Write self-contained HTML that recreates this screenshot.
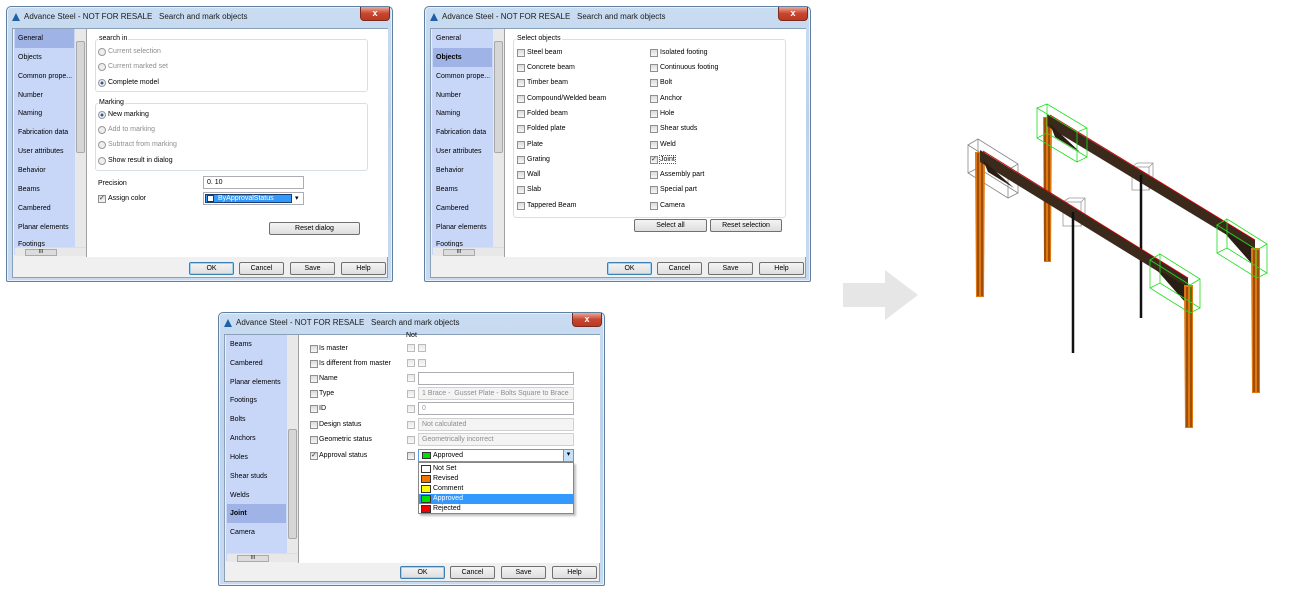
<!DOCTYPE html>
<html><head><meta charset="utf-8"><style>
*{margin:0;padding:0;box-sizing:border-box}
body{width:1308px;height:592px;background:#fff;position:relative;overflow:hidden;font-family:"Liberation Sans",sans-serif;font-size:7px;color:#000}
.a{position:absolute;white-space:nowrap}
.dlg{position:absolute;width:387px;height:276px;background:linear-gradient(#c9dcf1,#bcd2ec 40%,#c7daf0);border:1px solid #61809f;border-radius:5px 5px 2px 2px;box-shadow:0 0 0 1px #e8f0fa inset}
.ttl{position:absolute;left:17px;top:5px;font-size:8px;color:#1a1a1a}
.ico{position:absolute;left:5px;top:6px;width:0;height:0;border-left:4px solid transparent;border-right:4px solid transparent;border-bottom:8px solid #1f5fa8}
.cls{position:absolute;left:353px;top:0;width:30px;height:14px;background:linear-gradient(#e9a99a,#c9452f 50%,#b83a22);border:1px solid #7a2b1e;border-top:none;border-radius:0 0 4px 4px;color:#fff;font-size:9px;text-align:center;line-height:13px;font-weight:bold}
.cl{position:absolute;left:5px;top:21px;width:376px;height:250px;background:#f0f0f0;border:1px solid #8aa0b8}
.lst{position:absolute;left:1px;top:0;width:61px;height:226px;background:#c8d6f8;overflow:hidden}
.sb{position:absolute;left:62px;top:0;width:11px;height:226px;background:#e8e8e8}
.th{position:absolute;left:1px;width:9px;background:#d6d6d6;border:1px solid #a8a8a8;border-radius:2px}
.hs{position:absolute;left:2px;top:218px;width:71px;height:9px;background:#e8e8e8;border-top:1px solid #ddd}
.hth{position:absolute;left:10px;top:1px;width:32px;height:7px;background:#dcdcdc;border:1px solid #aaa;font-size:5px;text-align:center;line-height:5px}
.wh{position:absolute;left:73px;top:0;width:302px;height:228px;background:#fff;border-left:1px solid #a0a0a0}
.it{position:absolute;left:1px;width:59px;height:19px;line-height:19px;padding-left:3px;font-size:7px;white-space:nowrap;overflow:hidden}
.sel{background:#9fb3e6;}
.btn{position:absolute;height:13px;width:45px;background:linear-gradient(#f4f4f4,#dedede);border:1px solid #707070;border-radius:2px;text-align:center;line-height:11px;font-size:7px}
.ok{border-color:#3c7fb1;box-shadow:0 0 0 1px #9ed3f3 inset}
.cb{position:absolute;width:8px;height:8px;border:1px solid #8e8f8f;background:linear-gradient(#dcdcdc,#f6f6f6)}
.rd{position:absolute;width:8px;height:8px;border:1px solid #999;border-radius:50%;background:#eee}
.dis{color:#8d8d8d}
.grp{position:absolute;border:1px solid #d5dfe5;border-radius:3px}
.gl{position:absolute;background:#fff;padding:0 1px;font-size:7px}
.inp{position:absolute;height:13px;border:1px solid #abadb3;background:#fff;font-size:7px;line-height:11px;padding-left:3px}
.gi{background:#f4f4f4;border-color:#d0d0d0;color:#8d8d8d}
</style></head><body>

<!-- DIALOG 1 -->
<div class="dlg" style="left:6px;top:6px">
<div class="ico"></div><div class="ttl">Advance Steel - NOT FOR RESALE&nbsp;&nbsp; Search and mark objects</div>
<div class="cls">x</div>
<div class="cl">
 <div class="lst">
  <div class="it sel" style="top:0">General</div>
  <div class="it" style="top:19px">Objects</div>
  <div class="it" style="top:38px">Common prope...</div>
  <div class="it" style="top:57px">Number</div>
  <div class="it" style="top:75px">Naming</div>
  <div class="it" style="top:94px">Fabrication data</div>
  <div class="it" style="top:113px">User attributes</div>
  <div class="it" style="top:132px">Behavior</div>
  <div class="it" style="top:151px">Beams</div>
  <div class="it" style="top:170px">Cambered</div>
  <div class="it" style="top:189px">Planar elements</div>
  <div class="it" style="top:207px;height:11px;line-height:18px">Footings</div>
 </div>
 <div class="sb"><div class="th" style="top:12px;height:112px"></div></div>
 <div class="hs"><div class="hth">III</div></div>
 <div class="wh">
  <div class="grp" style="left:8px;top:10px;width:273px;height:53px"></div><div class="gl" style="left:11px;top:6px">search in</div>
  <div class="rd" style="left:11px;top:19px"></div><div class="a dis" style="left:21px;top:19px">Current selection</div>
  <div class="rd" style="left:11px;top:34px"></div><div class="a dis" style="left:21px;top:34px">Current marked set</div>
  <div class="rd" style="left:11px;top:50px;background:radial-gradient(#1f5fa8 30%,#eee 40%)"></div><div class="a" style="left:21px;top:50px">Complete model</div>
  <div class="grp" style="left:8px;top:74px;width:273px;height:68px"></div><div class="gl" style="left:11px;top:70px">Marking</div>
  <div class="rd" style="left:11px;top:82px;background:radial-gradient(#1f5fa8 30%,#eee 40%)"></div><div class="a" style="left:21px;top:82px">New marking</div>
  <div class="rd" style="left:11px;top:97px"></div><div class="a dis" style="left:21px;top:97px">Add to marking</div>
  <div class="rd" style="left:11px;top:112px"></div><div class="a dis" style="left:21px;top:112px">Subtract from marking</div>
  <div class="rd" style="left:11px;top:128px"></div><div class="a" style="left:21px;top:128px">Show result in dialog</div>
  <div class="a" style="left:11px;top:151px">Precision</div>
  <div class="inp" style="left:116px;top:147px;width:101px">0. 10</div>
  <div class="cb" style="left:11px;top:166px;font-size:7px;line-height:6px;color:#333">✓</div><div class="a" style="left:21px;top:166px">Assign color</div>
  <div class="inp" style="left:116px;top:163px;width:101px;padding:1px"><div style="position:absolute;left:1px;top:1px;width:87px;height:9px;background:#3399ff;border:1px solid #1a3e6e;color:#fff;padding-left:12px;line-height:7px">ByApprovalStatus</div><div style="position:absolute;left:3px;top:2px;width:7px;height:7px;background:#fff;border:1px solid #333"></div><div class="a" style="left:91px;top:0;font-size:7px">▾</div></div>
  <div class="btn" style="left:182px;top:193px;width:91px">Reset dialog</div>
 </div>
 <div class="btn ok" style="left:176px;top:233px">OK</div>
 <div class="btn" style="left:226px;top:233px">Cancel</div>
 <div class="btn" style="left:277px;top:233px">Save</div>
 <div class="btn" style="left:328px;top:233px">Help</div>
</div></div>

<!-- DIALOG 2 -->
<div class="dlg" style="left:424px;top:6px">
<div class="ico"></div><div class="ttl">Advance Steel - NOT FOR RESALE&nbsp;&nbsp; Search and mark objects</div>
<div class="cls">x</div>
<div class="cl">
 <div class="lst">
  <div class="it" style="top:0">General</div>
  <div class="it sel" style="top:19px;font-weight:bold">Objects</div>
  <div class="it" style="top:38px">Common prope...</div>
  <div class="it" style="top:57px">Number</div>
  <div class="it" style="top:75px">Naming</div>
  <div class="it" style="top:94px">Fabrication data</div>
  <div class="it" style="top:113px">User attributes</div>
  <div class="it" style="top:132px">Behavior</div>
  <div class="it" style="top:151px">Beams</div>
  <div class="it" style="top:170px">Cambered</div>
  <div class="it" style="top:189px">Planar elements</div>
  <div class="it" style="top:207px;height:11px;line-height:18px">Footings</div>
 </div>
 <div class="sb"><div class="th" style="top:12px;height:112px"></div></div>
 <div class="hs"><div class="hth">III</div></div>
 <div class="wh">
  <div class="grp" style="left:8px;top:10px;width:273px;height:179px"></div><div class="gl" style="left:11px;top:6px">Select objects</div>
  <div class="cb" style="left:12px;top:20px"></div><div class="a" style="left:22px;top:20px">Steel beam</div>
  <div class="cb" style="left:12px;top:35px"></div><div class="a" style="left:22px;top:35px">Concrete beam</div>
  <div class="cb" style="left:12px;top:50px"></div><div class="a" style="left:22px;top:50px">Timber beam</div>
  <div class="cb" style="left:12px;top:66px"></div><div class="a" style="left:22px;top:66px">Compound/Welded beam</div>
  <div class="cb" style="left:12px;top:81px"></div><div class="a" style="left:22px;top:81px">Folded beam</div>
  <div class="cb" style="left:12px;top:96px"></div><div class="a" style="left:22px;top:96px">Folded plate</div>
  <div class="cb" style="left:12px;top:112px"></div><div class="a" style="left:22px;top:112px">Plate</div>
  <div class="cb" style="left:12px;top:127px"></div><div class="a" style="left:22px;top:127px">Grating</div>
  <div class="cb" style="left:12px;top:142px"></div><div class="a" style="left:22px;top:142px">Wall</div>
  <div class="cb" style="left:12px;top:157px"></div><div class="a" style="left:22px;top:157px">Slab</div>
  <div class="cb" style="left:12px;top:173px"></div><div class="a" style="left:22px;top:173px">Tappered Beam</div>
  <div class="cb" style="left:145px;top:20px"></div><div class="a" style="left:155px;top:20px">Isolated footing</div>
  <div class="cb" style="left:145px;top:35px"></div><div class="a" style="left:155px;top:35px">Continuous footing</div>
  <div class="cb" style="left:145px;top:50px"></div><div class="a" style="left:155px;top:50px">Bolt</div>
  <div class="cb" style="left:145px;top:66px"></div><div class="a" style="left:155px;top:66px">Anchor</div>
  <div class="cb" style="left:145px;top:81px"></div><div class="a" style="left:155px;top:81px">Hole</div>
  <div class="cb" style="left:145px;top:96px"></div><div class="a" style="left:155px;top:96px">Shear studs</div>
  <div class="cb" style="left:145px;top:112px"></div><div class="a" style="left:155px;top:112px">Weld</div>
  <div class="cb" style="left:145px;top:127px;line-height:6px;color:#333">✓</div><div class="a" style="left:155px;top:127px;outline:1px dotted #555">Joint</div>
  <div class="cb" style="left:145px;top:142px"></div><div class="a" style="left:155px;top:142px">Assembly part</div>
  <div class="cb" style="left:145px;top:157px"></div><div class="a" style="left:155px;top:157px">Special part</div>
  <div class="cb" style="left:145px;top:173px"></div><div class="a" style="left:155px;top:173px">Camera</div>
  <div class="btn" style="left:129px;top:190px;width:73px">Select all</div>
  <div class="btn" style="left:205px;top:190px;width:72px">Reset selection</div>
 </div>
 <div class="btn ok" style="left:176px;top:233px">OK</div>
 <div class="btn" style="left:226px;top:233px">Cancel</div>
 <div class="btn" style="left:277px;top:233px">Save</div>
 <div class="btn" style="left:328px;top:233px">Help</div>
</div></div>

<!-- DIALOG 3 -->
<div class="dlg" style="left:218px;top:312px;height:274px">
<div class="ico"></div><div class="ttl">Advance Steel - NOT FOR RESALE&nbsp;&nbsp; Search and mark objects</div>
<div class="cls">x</div>
<div class="cl" style="height:248px">
 <div class="lst">
  <div class="it" style="top:0">Beams</div>
  <div class="it" style="top:19px">Cambered</div>
  <div class="it" style="top:38px">Planar elements</div>
  <div class="it" style="top:56px">Footings</div>
  <div class="it" style="top:75px">Bolts</div>
  <div class="it" style="top:94px">Anchors</div>
  <div class="it" style="top:113px">Holes</div>
  <div class="it" style="top:132px">Shear studs</div>
  <div class="it" style="top:151px">Welds</div>
  <div class="it sel" style="top:169px;font-weight:bold">Joint</div>
  <div class="it" style="top:188px">Camera</div>
 </div>
 <div class="sb"><div class="th" style="top:94px;height:110px"></div></div>
 <div class="hs"><div class="hth">III</div></div>
 <div class="wh">
  <div class="a" style="left:107px;top:-3px">Not</div>
  <div class="cb" style="left:11px;top:10px"></div><div class="a" style="left:20px;top:10px">Is master</div>
  <div class="cb" style="left:108px;top:9px;opacity:.6"></div><div class="cb" style="left:119px;top:9px;opacity:.6"></div>
  <div class="cb" style="left:11px;top:25px"></div><div class="a" style="left:20px;top:25px">Is different from master</div>
  <div class="cb" style="left:108px;top:24px;opacity:.6"></div><div class="cb" style="left:119px;top:24px;opacity:.6"></div>
  <div class="cb" style="left:11px;top:40px"></div><div class="a" style="left:20px;top:40px">Name</div>
  <div class="cb" style="left:108px;top:39px;opacity:.6"></div><div class="inp" style="left:119px;top:37px;width:156px"></div>
  <div class="cb" style="left:11px;top:55px"></div><div class="a" style="left:20px;top:55px">Type</div>
  <div class="cb" style="left:108px;top:55px;opacity:.6"></div><div class="inp gi" style="left:119px;top:52px;width:156px">1 Brace -&nbsp; Gusset Plate - Bolts Square to Brace</div>
  <div class="cb" style="left:11px;top:70px"></div><div class="a" style="left:20px;top:70px">ID</div>
  <div class="cb" style="left:108px;top:70px;opacity:.6"></div><div class="inp" style="left:119px;top:67px;width:156px;color:#999">0</div>
  <div class="cb" style="left:11px;top:86px"></div><div class="a" style="left:20px;top:86px">Design status</div>
  <div class="cb" style="left:108px;top:86px;opacity:.6"></div><div class="inp gi" style="left:119px;top:83px;width:156px">Not calculated</div>
  <div class="cb" style="left:11px;top:101px"></div><div class="a" style="left:20px;top:101px">Geometric status</div>
  <div class="cb" style="left:108px;top:101px;opacity:.6"></div><div class="inp gi" style="left:119px;top:98px;width:156px">Geometrically incorrect</div>
  <div class="cb" style="left:11px;top:117px;line-height:6px;color:#333">✓</div><div class="a" style="left:20px;top:117px">Approval status</div>
  <div class="cb" style="left:108px;top:117px"></div>
  <div class="inp" style="left:119px;top:114px;width:156px;padding-left:14px;border-color:#569de5">Approved<div style="position:absolute;left:3px;top:2px;width:9px;height:7px;background:#00e000;border:1px solid #333"></div><div style="position:absolute;right:0;top:0;width:10px;height:11px;background:#c7e2f8;border-left:1px solid #569de5;text-align:center;line-height:10px">▾</div></div>
  <div style="position:absolute;left:119px;top:127px;width:156px;height:52px;background:#fff;border:1px solid #888;box-shadow:2px 2px 2px rgba(0,0,0,.25)">
   <div style="position:absolute;left:0;top:1px;width:154px;height:10px;line-height:10px;padding-left:14px">Not Set<div style="position:absolute;left:2px;top:1px;width:10px;height:8px;background:#fff;border:1px solid #333"></div></div>
   <div style="position:absolute;left:0;top:11px;width:154px;height:10px;line-height:10px;padding-left:14px">Revised<div style="position:absolute;left:2px;top:1px;width:10px;height:8px;background:#f07800;border:1px solid #333"></div></div>
   <div style="position:absolute;left:0;top:21px;width:154px;height:10px;line-height:10px;padding-left:14px">Comment<div style="position:absolute;left:2px;top:1px;width:10px;height:8px;background:#ffff00;border:1px solid #333"></div></div>
   <div style="position:absolute;left:0;top:31px;width:154px;height:10px;line-height:10px;padding-left:14px;background:#3399ff;color:#fff">Approved<div style="position:absolute;left:2px;top:1px;width:10px;height:8px;background:#00e000;border:1px solid #333"></div></div>
   <div style="position:absolute;left:0;top:41px;width:154px;height:10px;line-height:10px;padding-left:14px">Rejected<div style="position:absolute;left:2px;top:1px;width:10px;height:8px;background:#f00000;border:1px solid #333"></div></div>
  </div>
 </div>
 <div class="btn ok" style="left:175px;top:231px">OK</div>
 <div class="btn" style="left:225px;top:231px">Cancel</div>
 <div class="btn" style="left:276px;top:231px">Save</div>
 <div class="btn" style="left:327px;top:231px">Help</div>
</div></div>

<svg class="a" style="left:0;top:0" width="1308" height="592">
<polygon points="843,283 885,283 885,270 918,295 885,320 885,307 843,307" fill="#e6e6e6"/>
<g fill="none" stroke-width="0.8">
 <g stroke="#888"><polygon points="978,139 1018,164 1018,193 978,168"/><polygon points="968,145 1008,170 1008,198 968,173"/><path d="M968,145L978,139M1008,170L1018,164M1008,198L1018,193M968,173L978,168"/></g>
 <g stroke="#999"><rect x="1063" y="202" width="18" height="24"/><path d="M1063,202l6,-4h16v22l-4,6M1081,202l4,-4"/><rect x="1132" y="167" width="17" height="23"/><path d="M1132,167l5,-4h16v22l-4,5M1149,167l4,-4"/></g>
</g>
<!-- frame B -->
<polygon points="1043,117 1052,117 1051,262 1044,262" fill="#e07812"/><path d="M1045,118V261M1049,118V261" stroke="#5a2600" stroke-width="1"/>
<polygon points="1047,114 1255,240 1255,252 1047,126" fill="#3b2a1c"/><path d="M1050,115L1255,240" stroke="#c00" stroke-width="0.9"/>
<polygon points="1050,124 1080,152 1055,137" fill="#2a1e14"/><polygon points="1222,230 1253,248 1252,264" fill="#2a1e14"/>
<polygon points="1251,248 1260,248 1260,393 1252,393" fill="#e07812"/><path d="M1254,250V392M1258,250V392" stroke="#5a2600" stroke-width="1"/>
<path d="M1141,175V318" stroke="#111" stroke-width="2.5"/>
<!-- frame A -->
<polygon points="975,152 985,152 984,297 976,297" fill="#e07812"/><path d="M978,153V296M982,153V296" stroke="#5a2600" stroke-width="1"/>
<polygon points="980,150 1188,278 1188,290 980,162" fill="#3b2a1c"/><path d="M983,151L1188,278" stroke="#c00" stroke-width="0.9"/>
<polygon points="983,160 1014,188 988,172" fill="#2a1e14"/><polygon points="1155,268 1186,286 1185,302" fill="#2a1e14"/>
<polygon points="1184,285 1193,285 1193,428 1185,428" fill="#e07812"/><path d="M1187,287V427M1191,287V427" stroke="#5a2600" stroke-width="1"/>
<path d="M1073,212V353" stroke="#111" stroke-width="2.5"/>
<g fill="none" stroke="#22dd22" stroke-width="0.8">
 <polygon points="1047,104 1087,128 1087,157 1047,133"/><polygon points="1037,108 1077,132 1077,162 1037,138"/><path d="M1037,108L1047,104M1077,132L1087,128M1077,162L1087,157M1037,138L1047,133"/>
 <polygon points="1160,254 1200,279 1200,308 1160,283"/><polygon points="1150,260 1190,285 1190,313 1150,288"/><path d="M1150,260L1160,254M1190,285L1200,279M1190,313L1200,308M1150,288L1160,283"/>
 <polygon points="1227,219 1267,244 1267,273 1227,248"/><polygon points="1217,225 1257,250 1257,278 1217,253"/><path d="M1217,225L1227,219M1257,250L1267,244M1257,278L1267,273M1217,253L1227,248"/>
</g>
</svg>
</body></html>
